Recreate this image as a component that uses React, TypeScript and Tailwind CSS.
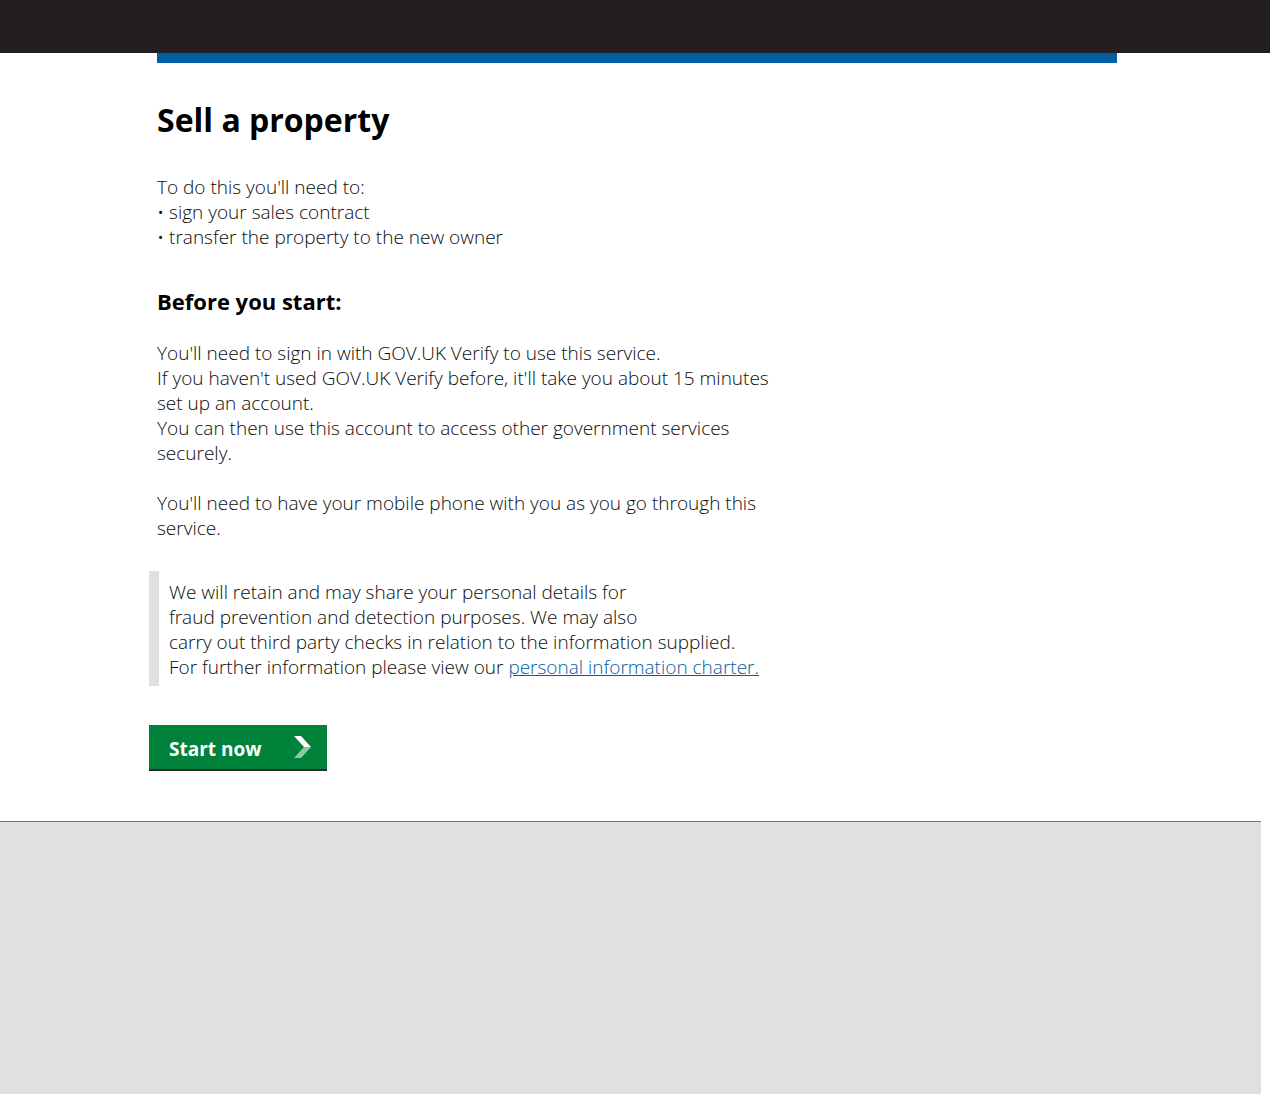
import React from "react";

const body = "font-['Open_Sans',_'Liberation_Sans',_sans-serif]";

const Chevron = () => (
  <svg width="18" height="22" viewBox="0 0 18 22" className="ml-auto">
    <polygon points="0,0 7,0 17,11 10,11" fill="#ffffff" />
    <polygon points="10,11 17,11 7,22 0,22" fill="#ffffff" fillOpacity="0.55" />
  </svg>
);

const App = () => {
  return (
    <div className={`${body} min-h-[1094px] flex flex-col bg-white text-[#0b0c0c]`}>
      <header className="h-[53px] bg-[#231f20]" />

      <main className="w-[960px] ml-[157px] flex-1">
        <div className="h-[10px] bg-[#005ea5]" />

        <h1 className="mt-[37px] text-[32px] leading-[40px] font-bold text-black">Sell a property</h1>

        <div className="mt-[35px] w-[640px] text-[19px] leading-[25px] font-light">
          <p>
            To do this you'll need to:
            <br />
            • sign your sales contract
            <br />
            • transfer the property to the new owner
          </p>

          <h2 className="mt-[39px] text-[22px] leading-[25px] font-bold text-black">Before you start:</h2>

          <p className="mt-[27px]">
            You'll need to sign in with GOV.UK Verify to use this service.
            <br />
            If you haven't used GOV.UK Verify before, it'll take you about 15 minutes set up an account.
            <br />
            You can then use this account to access other government services securely.
          </p>

          <p className="mt-[25px]">You'll need to have your mobile phone with you as you go through this service.</p>
        </div>

        <div className="mt-[30px] -ml-[8px] w-[660px] border-l-[10px] border-[#dee0e2] pl-[10px] pt-[9px] pb-[6px] text-[19px] leading-[25px] font-light">
          We will retain and may share your personal details for
          <br />
          fraud prevention and detection purposes. We may also
          <br />
          carry out third party checks in relation to the information supplied.
          <br />
          For further information please view our{" "}
          <a href="#" className="text-[#005ea5] underline">
            personal information charter.
          </a>
        </div>

        <button className="mt-[39px] -ml-[8px] w-[178px] h-[44px] flex items-center pl-[20px] pr-[15px] bg-[#00823b] text-white text-[19px] font-bold shadow-[0_2px_0_#2b2b2b]">
          <span className="pt-[4px]">Start now</span>
          <Chevron />
        </button>

        <div className="h-[46px]" />
      </main>

      <footer className="w-[1261px] h-[273px] border-t border-[#6f777b] bg-[#dee0e2]" />
    </div>
  );
};

export default App;
